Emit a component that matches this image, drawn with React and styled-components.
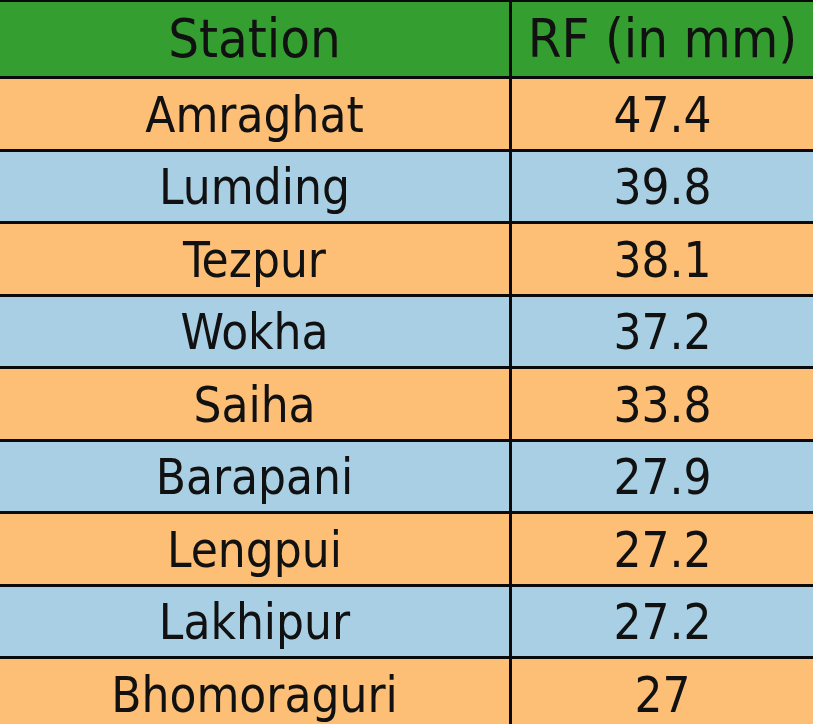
import React from "react";
import styled, { createGlobalStyle } from "styled-components";

const GlobalStyle = createGlobalStyle`
  html, body {
    margin: 0;
    padding: 0;
    background: #000;
    overflow: hidden;
  }
`;

const Table = styled.div`
  display: grid;
  grid-template-columns: 509px 1fr;
  grid-template-rows: 74px;
  grid-auto-rows: 69.5px;
  gap: 3px;
  padding-top: 2px;
  width: 813px;
  height: 724px;
  background: #0a0a0a;
  font-family: "DejaVu Sans Condensed", "DejaVu Sans", sans-serif;
  color: #111;
  overflow: hidden;
`;

const Cell = styled.div`
  display: flex;
  align-items: center;
  justify-content: center;
  font-size: ${(p) => (p.$head ? "54px" : "49px")};
  line-height: 1;
  background: ${(p) => p.$bg};
  white-space: nowrap;
  padding-top: ${(p) => (p.$head ? "0" : "3px")};
`;

const colors = {
  head: "#349e30",
  orange: "#fdbf76",
  blue: "#a8cfe4",
};

const rows = [
  ["Amraghat", "47.4"],
  ["Lumding", "39.8"],
  ["Tezpur", "38.1"],
  ["Wokha", "37.2"],
  ["Saiha", "33.8"],
  ["Barapani", "27.9"],
  ["Lengpui", "27.2"],
  ["Lakhipur", "27.2"],
  ["Bhomoraguri", "27"],
];

export default function App() {
  return (
    <>
      <GlobalStyle />
      <Table>
        <Cell $head $bg={colors.head}>Station</Cell>
        <Cell $head $bg={colors.head}>RF (in mm)</Cell>
        {rows.map(([name, rf], i) => {
          const bg = i % 2 === 0 ? colors.orange : colors.blue;
          return (
            <React.Fragment key={name}>
              <Cell $bg={bg}>{name}</Cell>
              <Cell $bg={bg}>{rf}</Cell>
            </React.Fragment>
          );
        })}
      </Table>
    </>
  );
}
